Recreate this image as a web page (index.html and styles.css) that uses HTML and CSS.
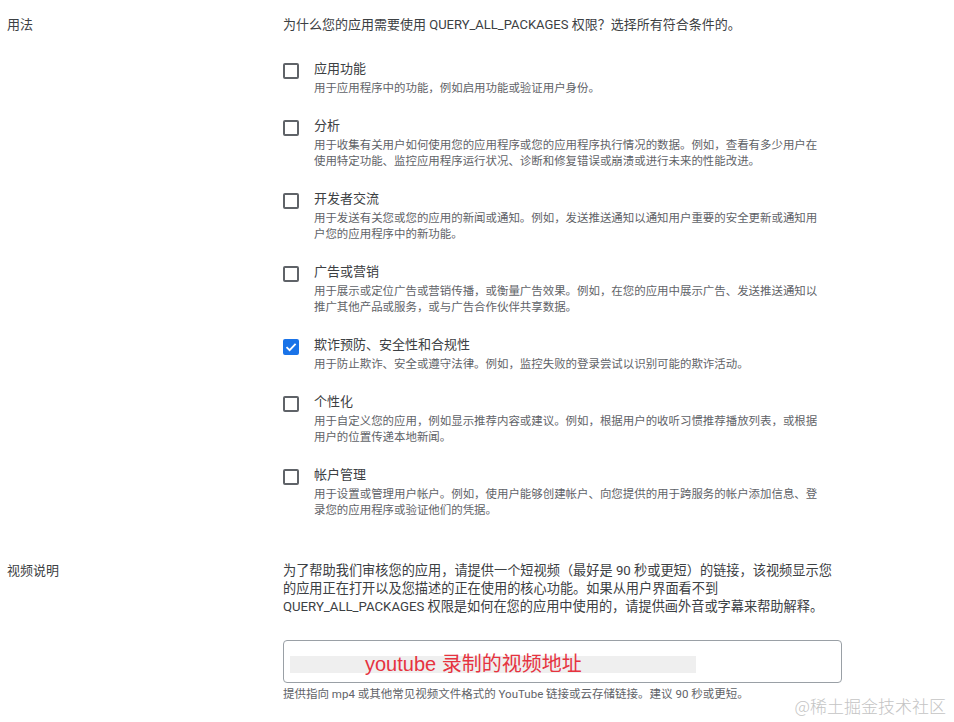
FILE: index.html
```html
<!DOCTYPE html>
<html lang="zh-CN">
<head>
    <meta charset="UTF-8">
    <meta name="viewport" content="width=device-width, initial-scale=1.0">
    <title>QUERY_ALL_PACKAGES 权限声明</title>
    <link rel="stylesheet" href="styles.css">
</head>
<body>
    <div class="form">
        <section class="row">
            <div class="row-label">用法</div>
            <div class="row-body">
                <p class="question">为什么您的应用需要使用 QUERY_ALL_PACKAGES 权限？选择所有符合条件的。</p>
                <ul class="options">
                    <li class="option">
                        <span class="checkbox"></span>
                        <div class="option-text">
                            <div class="option-title">应用功能</div>
                            <div class="option-desc">用于应用程序中的功能，例如启用功能或验证用户身份。</div>
                        </div>
                    </li>
                    <li class="option">
                        <span class="checkbox"></span>
                        <div class="option-text">
                            <div class="option-title">分析</div>
                            <div class="option-desc">用于收集有关用户如何使用您的应用程序或您的应用程序执行情况的数据。例如，查看有多少用户在<br>使用特定功能、监控应用程序运行状况、诊断和修复错误或崩溃或进行未来的性能改进。</div>
                        </div>
                    </li>
                    <li class="option">
                        <span class="checkbox"></span>
                        <div class="option-text">
                            <div class="option-title">开发者交流</div>
                            <div class="option-desc">用于发送有关您或您的应用的新闻或通知。例如，发送推送通知以通知用户重要的安全更新或通知用<br>户您的应用程序中的新功能。</div>
                        </div>
                    </li>
                    <li class="option">
                        <span class="checkbox"></span>
                        <div class="option-text">
                            <div class="option-title">广告或营销</div>
                            <div class="option-desc">用于展示或定位广告或营销传播，或衡量广告效果。例如，在您的应用中展示广告、发送推送通知以<br>推广其他产品或服务，或与广告合作伙伴共享数据。</div>
                        </div>
                    </li>
                    <li class="option">
                        <span class="checkbox checked">
                            <svg viewBox="0 0 16 16" width="16" height="16"><polyline points="3.5,8.2 6.6,11.2 12.6,4.8" fill="none" stroke="#fff" stroke-width="1.8"/></svg>
                        </span>
                        <div class="option-text">
                            <div class="option-title">欺诈预防、安全性和合规性</div>
                            <div class="option-desc">用于防止欺诈、安全或遵守法律。例如，监控失败的登录尝试以识别可能的欺诈活动。</div>
                        </div>
                    </li>
                    <li class="option">
                        <span class="checkbox"></span>
                        <div class="option-text">
                            <div class="option-title">个性化</div>
                            <div class="option-desc">用于自定义您的应用，例如显示推荐内容或建议。例如，根据用户的收听习惯推荐播放列表，或根据<br>用户的位置传递本地新闻。</div>
                        </div>
                    </li>
                    <li class="option">
                        <span class="checkbox"></span>
                        <div class="option-text">
                            <div class="option-title">帐户管理</div>
                            <div class="option-desc">用于设置或管理用户帐户。例如，使用户能够创建帐户、向您提供的用于跨服务的帐户添加信息、登<br>录您的应用程序或验证他们的凭据。</div>
                        </div>
                    </li>
                </ul>
            </div>
        </section>

        <section class="row video">
            <div class="row-label">视频说明</div>
            <div class="row-body">
                <p class="video-text">为了帮助我们审核您的应用，请提供一个短视频（最好是 90 秒或更短）的链接，该视频显示您<br>的应用正在打开以及您描述的正在使用的核心功能。如果从用户界面看不到<br>QUERY_ALL_PACKAGES 权限是如何在您的应用中使用的，请提供画外音或字幕来帮助解释。</p>
                <div class="url-field">
                    <div class="url-value">youtube 录制的视频地址</div>
                </div>
                <div class="field-hint">提供指向 mp4 或其他常见视频文件格式的 YouTube 链接或云存储链接。建议 90 秒或更短。</div>
            </div>
        </section>
    </div>

    <div class="watermark">@稀土掘金技术社区</div>
</body>
</html>
```

FILE: styles.css
```css
body {
    margin: 0;
    background-color: #fff;
    color: #3c4043;
    font-family: Roboto, "Noto Sans CJK SC", sans-serif;
    font-size: 13px;
    line-height: 18px;
}
.form {
    padding: 16px 0 0 7px;
}
.row {
    display: grid;
    grid-template-columns: 276px 560px;
}
.row.video {
    margin-top: 44px;
}
.row-label {
    color: #3c4043;
}
.question,
.video-text {
    margin: 0;
    white-space: nowrap;
}
.video-text {
    font-size: 13.2px;
}
.options {
    list-style: none;
    margin: 26px 0 0;
    padding: 0;
}
.option {
    display: flex;
    align-items: flex-start;
    margin-bottom: 21px;
}
.option:last-child {
    margin-bottom: 0;
}
.checkbox {
    box-sizing: border-box;
    flex: none;
    width: 16px;
    height: 16px;
    margin: 3px 15px 0 0;
    border: 2px solid #5f6368;
    border-radius: 2px;
    display: flex;
}
.checkbox.checked {
    background-color: #1a73e8;
    border-color: #1a73e8;
}
.checkbox svg {
    margin: -2px;
}
.option-title {
    color: #3c4043;
}
.option-desc {
    margin-top: 2px;
    font-size: 11.45px;
    line-height: 16px;
    color: #5f6368;
    white-space: nowrap;
}
.url-field {
    box-sizing: border-box;
    width: 559px;
    height: 43px;
    margin-top: 24px;
    padding: 15px 6px 0;
    border: 1px solid #9aa0a6;
    border-radius: 4px;
}
.url-value {
    width: 406px;
    height: 17px;
    padding-left: 75px;
    box-sizing: border-box;
    background-color: #efefef;
    color: #e6333f;
    font-family: "Liberation Sans", "Noto Sans CJK SC", sans-serif;
    font-size: 20px;
    line-height: 17px;
    white-space: nowrap;
}
.field-hint {
    margin-top: 3px;
    font-size: 11.5px;
    line-height: 16px;
    color: #5f6368;
    white-space: nowrap;
}
.watermark {
    position: absolute;
    right: 8px;
    top: 695px;
    font-family: "Noto Sans CJK SC", sans-serif;
    font-weight: 300;
    font-size: 17px;
    line-height: 22px;
    color: #c4c4c4;
}
```
